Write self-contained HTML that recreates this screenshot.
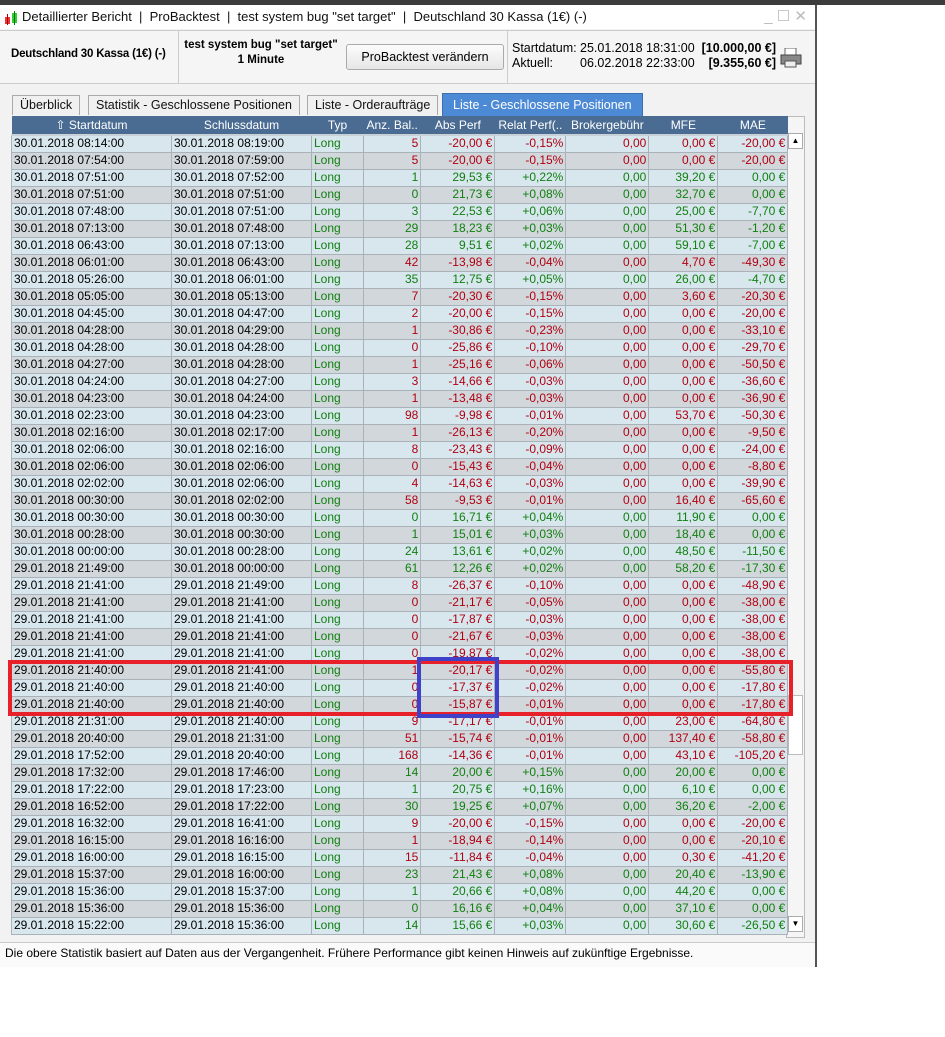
<!DOCTYPE html><html><head><meta charset="utf-8"><style>
*{box-sizing:border-box;margin:0;padding:0}
body{width:945px;height:1037px;background:#fff;font-family:"Liberation Sans",Arial,sans-serif;font-size:12px;position:relative;overflow:hidden}
#top{position:absolute;left:0;top:0;width:945px;height:5px;background:#3c3c3c}
#win{position:absolute;left:0;top:5px;width:817px;height:962px;background:#f2f2f2;border-right:2px solid #555;border-bottom:2px solid #444}
#title{position:absolute;left:0;top:0;width:815px;height:24px;background:#fff;font-size:13px;color:#111;line-height:24px;padding-left:22px}
#hdr{position:absolute;left:0;top:25px;width:815px;height:54px;background:#f5f5f5;border-top:1px solid #ccc;border-bottom:1px solid #ccc}
.tab{position:absolute;top:90px;height:20px;border:1px solid #aaa;border-bottom:none;background:#f0f0f0;font-size:12.5px;line-height:19px;padding:0 7px;color:#111}
table{position:absolute;left:11px;top:111px;border-collapse:collapse;table-layout:fixed;font-size:12px}
th{background:#4a6c93;color:#fff;font-weight:normal;height:19px;font-size:12px;padding:0 3px;white-space:nowrap;overflow:hidden;border-bottom:2px solid #c8d0d8}
td{height:17px;border:1px solid #a9b2b9;padding:0 2px;white-space:nowrap;overflow:hidden;line-height:15px}
td:nth-child(n+4){text-align:right}
tr.a td{background:#d8e6ee} tr.b td{background:#d2d7dc}
tr.r td:nth-child(n+3){color:#b00010} tr.g td:nth-child(n+3){color:#108010}
tr td:nth-child(3){color:#108010!important}
</style></head><body>
<div id="top"></div>
<div id="win">
<div id="title"><svg style="position:absolute;left:4px;top:6px" width="15" height="14"><rect x="1" y="6" width="5" height="7" fill="#e33"/><rect x="8" y="2" width="5" height="10" fill="#3c3"/><line x1="3.5" y1="3" x2="3.5" y2="14" stroke="#a00"/><line x1="10.5" y1="0" x2="10.5" y2="14" stroke="#070"/></svg>Detaillierter Bericht &nbsp;|&nbsp; ProBacktest &nbsp;|&nbsp; test system bug "set target" &nbsp;|&nbsp; Deutschland 30 Kassa (1€) (-)<span style="position:absolute;right:8px;top:0;color:#bbb;font-size:15px">_ ☐ ✕</span></div>
<div id="hdr">
<div style="position:absolute;left:11px;top:17px;font-weight:bold;font-size:11.5px;letter-spacing:-0.2px">Deutschland 30 Kassa (1€) (-)</div>
<div style="position:absolute;left:178px;top:0;width:1px;height:53px;background:#ccc"></div>
<div style="position:absolute;left:179px;top:7px;font-weight:bold;text-align:center;width:164px;line-height:15px;font-size:11.5px">test system bug "set target"<br>1 Minute</div>
<div style="position:absolute;left:346px;top:13px;width:158px;height:26px;border:1px solid #aaa;border-radius:3px;background:linear-gradient(#fcfcfc,#e6e6e6);text-align:center;line-height:24px;font-size:12.5px">ProBacktest verändern</div>
<div style="position:absolute;left:507px;top:0;width:1px;height:53px;background:#ccc"></div>
<div style="position:absolute;left:512px;top:10px;line-height:15px;font-size:12.5px">Startdatum:<br>Aktuell:</div>
<div style="position:absolute;left:580px;top:10px;line-height:15px;font-size:12.5px">25.01.2018 18:31:00 &nbsp;<b>[10.000,00 €]</b><br>06.02.2018 22:33:00 &nbsp;&nbsp;&nbsp;<b>[9.355,60 €]</b></div>
<svg style="position:absolute;left:780px;top:17px" width="22" height="20"><rect x="5" y="0" width="11" height="8" fill="#fff" stroke="#666"/><rect x="1" y="7" width="20" height="9" fill="#888" stroke="#444"/><rect x="5" y="13" width="11" height="6" fill="#eee" stroke="#555"/></svg>
</div>
<div class="tab" style="left:12px">Überblick</div>
<div class="tab" style="left:88px">Statistik - Geschlossene Positionen</div>
<div class="tab" style="left:307px">Liste - Orderaufträge</div>
<div class="tab" style="left:442px;top:88px;height:23px;background:#4d8ad6;color:#fff;border-color:#3a6fb0;line-height:22px;padding:0 10px">Liste - Geschlossene Positionen</div>
<div style="position:absolute;left:786px;top:111px;width:19px;height:822px;border:1px solid #bbb;background:#f5f5f5"></div>
<div style="position:absolute;left:788px;top:128px;width:15px;height:16px;border:1px solid #aaa;background:#fff;font-size:8px;text-align:center;line-height:14px">▲</div>
<div style="position:absolute;left:788px;top:911px;width:15px;height:16px;border:1px solid #aaa;background:#fff;font-size:8px;text-align:center;line-height:14px">▼</div>
<div style="position:absolute;left:788px;top:690px;width:15px;height:60px;border:1px solid #bbb;background:#fff"></div>
<table>
<colgroup><col style="width:160px"><col style="width:140px"><col style="width:52px"><col style="width:56px"><col style="width:74px"><col style="width:71px"><col style="width:83px"><col style="width:69px"><col style="width:70px"></colgroup>
<tr><th>⇧ Startdatum</th><th>Schlussdatum</th><th>Typ</th><th>Anz. Bal..</th><th>Abs Perf</th><th>Relat Perf(..</th><th>Brokergebühr</th><th>MFE</th><th>MAE</th></tr>
<tr class="a r"><td>30.01.2018 08:14:00</td><td>30.01.2018 08:19:00</td><td>Long</td><td>5</td><td>-20,00 €</td><td>-0,15%</td><td>0,00</td><td>0,00 €</td><td>-20,00 €</td></tr>
<tr class="b r"><td>30.01.2018 07:54:00</td><td>30.01.2018 07:59:00</td><td>Long</td><td>5</td><td>-20,00 €</td><td>-0,15%</td><td>0,00</td><td>0,00 €</td><td>-20,00 €</td></tr>
<tr class="a g"><td>30.01.2018 07:51:00</td><td>30.01.2018 07:52:00</td><td>Long</td><td>1</td><td>29,53 €</td><td>+0,22%</td><td>0,00</td><td>39,20 €</td><td>0,00 €</td></tr>
<tr class="b g"><td>30.01.2018 07:51:00</td><td>30.01.2018 07:51:00</td><td>Long</td><td>0</td><td>21,73 €</td><td>+0,08%</td><td>0,00</td><td>32,70 €</td><td>0,00 €</td></tr>
<tr class="a g"><td>30.01.2018 07:48:00</td><td>30.01.2018 07:51:00</td><td>Long</td><td>3</td><td>22,53 €</td><td>+0,06%</td><td>0,00</td><td>25,00 €</td><td>-7,70 €</td></tr>
<tr class="b g"><td>30.01.2018 07:13:00</td><td>30.01.2018 07:48:00</td><td>Long</td><td>29</td><td>18,23 €</td><td>+0,03%</td><td>0,00</td><td>51,30 €</td><td>-1,20 €</td></tr>
<tr class="a g"><td>30.01.2018 06:43:00</td><td>30.01.2018 07:13:00</td><td>Long</td><td>28</td><td>9,51 €</td><td>+0,02%</td><td>0,00</td><td>59,10 €</td><td>-7,00 €</td></tr>
<tr class="b r"><td>30.01.2018 06:01:00</td><td>30.01.2018 06:43:00</td><td>Long</td><td>42</td><td>-13,98 €</td><td>-0,04%</td><td>0,00</td><td>4,70 €</td><td>-49,30 €</td></tr>
<tr class="a g"><td>30.01.2018 05:26:00</td><td>30.01.2018 06:01:00</td><td>Long</td><td>35</td><td>12,75 €</td><td>+0,05%</td><td>0,00</td><td>26,00 €</td><td>-4,70 €</td></tr>
<tr class="b r"><td>30.01.2018 05:05:00</td><td>30.01.2018 05:13:00</td><td>Long</td><td>7</td><td>-20,30 €</td><td>-0,15%</td><td>0,00</td><td>3,60 €</td><td>-20,30 €</td></tr>
<tr class="a r"><td>30.01.2018 04:45:00</td><td>30.01.2018 04:47:00</td><td>Long</td><td>2</td><td>-20,00 €</td><td>-0,15%</td><td>0,00</td><td>0,00 €</td><td>-20,00 €</td></tr>
<tr class="b r"><td>30.01.2018 04:28:00</td><td>30.01.2018 04:29:00</td><td>Long</td><td>1</td><td>-30,86 €</td><td>-0,23%</td><td>0,00</td><td>0,00 €</td><td>-33,10 €</td></tr>
<tr class="a r"><td>30.01.2018 04:28:00</td><td>30.01.2018 04:28:00</td><td>Long</td><td>0</td><td>-25,86 €</td><td>-0,10%</td><td>0,00</td><td>0,00 €</td><td>-29,70 €</td></tr>
<tr class="b r"><td>30.01.2018 04:27:00</td><td>30.01.2018 04:28:00</td><td>Long</td><td>1</td><td>-25,16 €</td><td>-0,06%</td><td>0,00</td><td>0,00 €</td><td>-50,50 €</td></tr>
<tr class="a r"><td>30.01.2018 04:24:00</td><td>30.01.2018 04:27:00</td><td>Long</td><td>3</td><td>-14,66 €</td><td>-0,03%</td><td>0,00</td><td>0,00 €</td><td>-36,60 €</td></tr>
<tr class="b r"><td>30.01.2018 04:23:00</td><td>30.01.2018 04:24:00</td><td>Long</td><td>1</td><td>-13,48 €</td><td>-0,03%</td><td>0,00</td><td>0,00 €</td><td>-36,90 €</td></tr>
<tr class="a r"><td>30.01.2018 02:23:00</td><td>30.01.2018 04:23:00</td><td>Long</td><td>98</td><td>-9,98 €</td><td>-0,01%</td><td>0,00</td><td>53,70 €</td><td>-50,30 €</td></tr>
<tr class="b r"><td>30.01.2018 02:16:00</td><td>30.01.2018 02:17:00</td><td>Long</td><td>1</td><td>-26,13 €</td><td>-0,20%</td><td>0,00</td><td>0,00 €</td><td>-9,50 €</td></tr>
<tr class="a r"><td>30.01.2018 02:06:00</td><td>30.01.2018 02:16:00</td><td>Long</td><td>8</td><td>-23,43 €</td><td>-0,09%</td><td>0,00</td><td>0,00 €</td><td>-24,00 €</td></tr>
<tr class="b r"><td>30.01.2018 02:06:00</td><td>30.01.2018 02:06:00</td><td>Long</td><td>0</td><td>-15,43 €</td><td>-0,04%</td><td>0,00</td><td>0,00 €</td><td>-8,80 €</td></tr>
<tr class="a r"><td>30.01.2018 02:02:00</td><td>30.01.2018 02:06:00</td><td>Long</td><td>4</td><td>-14,63 €</td><td>-0,03%</td><td>0,00</td><td>0,00 €</td><td>-39,90 €</td></tr>
<tr class="b r"><td>30.01.2018 00:30:00</td><td>30.01.2018 02:02:00</td><td>Long</td><td>58</td><td>-9,53 €</td><td>-0,01%</td><td>0,00</td><td>16,40 €</td><td>-65,60 €</td></tr>
<tr class="a g"><td>30.01.2018 00:30:00</td><td>30.01.2018 00:30:00</td><td>Long</td><td>0</td><td>16,71 €</td><td>+0,04%</td><td>0,00</td><td>11,90 €</td><td>0,00 €</td></tr>
<tr class="b g"><td>30.01.2018 00:28:00</td><td>30.01.2018 00:30:00</td><td>Long</td><td>1</td><td>15,01 €</td><td>+0,03%</td><td>0,00</td><td>18,40 €</td><td>0,00 €</td></tr>
<tr class="a g"><td>30.01.2018 00:00:00</td><td>30.01.2018 00:28:00</td><td>Long</td><td>24</td><td>13,61 €</td><td>+0,02%</td><td>0,00</td><td>48,50 €</td><td>-11,50 €</td></tr>
<tr class="b g"><td>29.01.2018 21:49:00</td><td>30.01.2018 00:00:00</td><td>Long</td><td>61</td><td>12,26 €</td><td>+0,02%</td><td>0,00</td><td>58,20 €</td><td>-17,30 €</td></tr>
<tr class="a r"><td>29.01.2018 21:41:00</td><td>29.01.2018 21:49:00</td><td>Long</td><td>8</td><td>-26,37 €</td><td>-0,10%</td><td>0,00</td><td>0,00 €</td><td>-48,90 €</td></tr>
<tr class="b r"><td>29.01.2018 21:41:00</td><td>29.01.2018 21:41:00</td><td>Long</td><td>0</td><td>-21,17 €</td><td>-0,05%</td><td>0,00</td><td>0,00 €</td><td>-38,00 €</td></tr>
<tr class="a r"><td>29.01.2018 21:41:00</td><td>29.01.2018 21:41:00</td><td>Long</td><td>0</td><td>-17,87 €</td><td>-0,03%</td><td>0,00</td><td>0,00 €</td><td>-38,00 €</td></tr>
<tr class="b r"><td>29.01.2018 21:41:00</td><td>29.01.2018 21:41:00</td><td>Long</td><td>0</td><td>-21,67 €</td><td>-0,03%</td><td>0,00</td><td>0,00 €</td><td>-38,00 €</td></tr>
<tr class="a r"><td>29.01.2018 21:41:00</td><td>29.01.2018 21:41:00</td><td>Long</td><td>0</td><td>-19,87 €</td><td>-0,02%</td><td>0,00</td><td>0,00 €</td><td>-38,00 €</td></tr>
<tr class="b r"><td>29.01.2018 21:40:00</td><td>29.01.2018 21:41:00</td><td>Long</td><td>1</td><td>-20,17 €</td><td>-0,02%</td><td>0,00</td><td>0,00 €</td><td>-55,80 €</td></tr>
<tr class="a r"><td>29.01.2018 21:40:00</td><td>29.01.2018 21:40:00</td><td>Long</td><td>0</td><td>-17,37 €</td><td>-0,02%</td><td>0,00</td><td>0,00 €</td><td>-17,80 €</td></tr>
<tr class="b r"><td>29.01.2018 21:40:00</td><td>29.01.2018 21:40:00</td><td>Long</td><td>0</td><td>-15,87 €</td><td>-0,01%</td><td>0,00</td><td>0,00 €</td><td>-17,80 €</td></tr>
<tr class="a r"><td>29.01.2018 21:31:00</td><td>29.01.2018 21:40:00</td><td>Long</td><td>9</td><td>-17,17 €</td><td>-0,01%</td><td>0,00</td><td>23,00 €</td><td>-64,80 €</td></tr>
<tr class="b r"><td>29.01.2018 20:40:00</td><td>29.01.2018 21:31:00</td><td>Long</td><td>51</td><td>-15,74 €</td><td>-0,01%</td><td>0,00</td><td>137,40 €</td><td>-58,80 €</td></tr>
<tr class="a r"><td>29.01.2018 17:52:00</td><td>29.01.2018 20:40:00</td><td>Long</td><td>168</td><td>-14,36 €</td><td>-0,01%</td><td>0,00</td><td>43,10 €</td><td>-105,20 €</td></tr>
<tr class="b g"><td>29.01.2018 17:32:00</td><td>29.01.2018 17:46:00</td><td>Long</td><td>14</td><td>20,00 €</td><td>+0,15%</td><td>0,00</td><td>20,00 €</td><td>0,00 €</td></tr>
<tr class="a g"><td>29.01.2018 17:22:00</td><td>29.01.2018 17:23:00</td><td>Long</td><td>1</td><td>20,75 €</td><td>+0,16%</td><td>0,00</td><td>6,10 €</td><td>0,00 €</td></tr>
<tr class="b g"><td>29.01.2018 16:52:00</td><td>29.01.2018 17:22:00</td><td>Long</td><td>30</td><td>19,25 €</td><td>+0,07%</td><td>0,00</td><td>36,20 €</td><td>-2,00 €</td></tr>
<tr class="a r"><td>29.01.2018 16:32:00</td><td>29.01.2018 16:41:00</td><td>Long</td><td>9</td><td>-20,00 €</td><td>-0,15%</td><td>0,00</td><td>0,00 €</td><td>-20,00 €</td></tr>
<tr class="b r"><td>29.01.2018 16:15:00</td><td>29.01.2018 16:16:00</td><td>Long</td><td>1</td><td>-18,94 €</td><td>-0,14%</td><td>0,00</td><td>0,00 €</td><td>-20,10 €</td></tr>
<tr class="a r"><td>29.01.2018 16:00:00</td><td>29.01.2018 16:15:00</td><td>Long</td><td>15</td><td>-11,84 €</td><td>-0,04%</td><td>0,00</td><td>0,30 €</td><td>-41,20 €</td></tr>
<tr class="b g"><td>29.01.2018 15:37:00</td><td>29.01.2018 16:00:00</td><td>Long</td><td>23</td><td>21,43 €</td><td>+0,08%</td><td>0,00</td><td>20,40 €</td><td>-13,90 €</td></tr>
<tr class="a g"><td>29.01.2018 15:36:00</td><td>29.01.2018 15:37:00</td><td>Long</td><td>1</td><td>20,66 €</td><td>+0,08%</td><td>0,00</td><td>44,20 €</td><td>0,00 €</td></tr>
<tr class="b g"><td>29.01.2018 15:36:00</td><td>29.01.2018 15:36:00</td><td>Long</td><td>0</td><td>16,16 €</td><td>+0,04%</td><td>0,00</td><td>37,10 €</td><td>0,00 €</td></tr>
<tr class="a g"><td>29.01.2018 15:22:00</td><td>29.01.2018 15:36:00</td><td>Long</td><td>14</td><td>15,66 €</td><td>+0,03%</td><td>0,00</td><td>30,60 €</td><td>-26,50 €</td></tr>
</table>
<div style="position:absolute;left:0;top:937px;width:815px;height:1px;background:#ccc"></div>
<div style="position:absolute;left:0;top:938px;width:815px;height:24px;background:#fafafa;font-size:12px;line-height:20px;padding-left:5px">Die obere Statistik basiert auf Daten aus der Vergangenheit. Frühere Performance gibt keinen Hinweis auf zukünftige Ergebnisse.</div>
</div>
<div style="position:absolute;left:8px;top:660px;width:785px;height:56px;border:4px solid #e8202a"></div>
<div style="position:absolute;left:417px;top:657px;width:82px;height:61px;border:4px solid #3f42c8"></div>
</body></html>
